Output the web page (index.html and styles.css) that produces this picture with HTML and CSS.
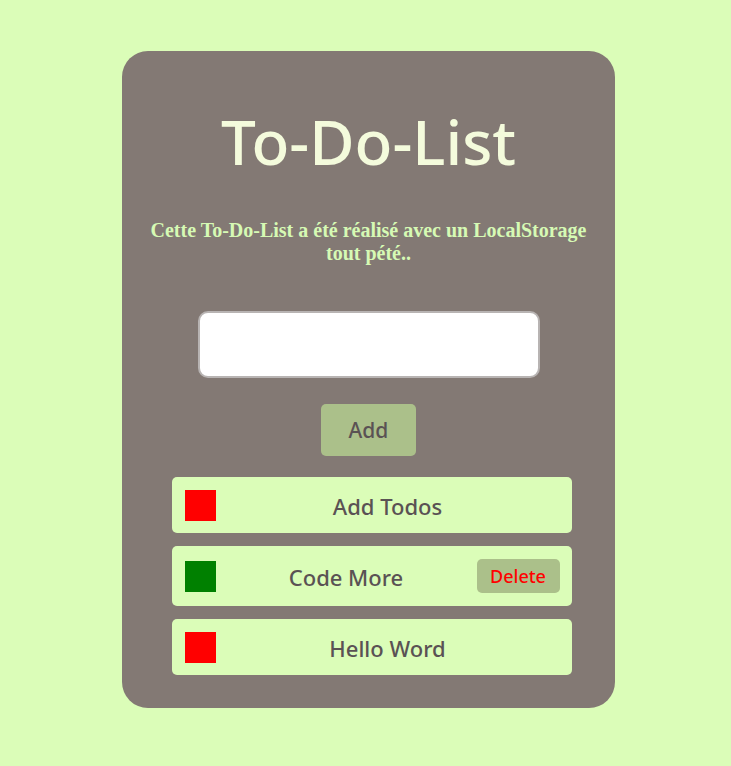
FILE: index.html
```html
<!DOCTYPE html>
<html lang="fr">
<head>
<meta charset="utf-8">
<title>To-Do-List</title>
<link rel="stylesheet" href="styles.css">
</head>
<body>
<main class="card">
  <h1 class="title">To-Do-List</h1>
  <p class="subtitle">Cette To-Do-List a été réalisé avec un LocalStorage tout pété..</p>
  <input class="field" type="text">
  <button class="add">Add</button>
  <ul class="list">
    <li class="item"><span class="box red"></span><span class="label">Add Todos</span></li>
    <li class="item"><span class="box green"></span><span class="label">Code More</span><button class="del">Delete</button></li>
    <li class="item"><span class="box red"></span><span class="label">Hello Word</span></li>
  </ul>
</main>
</body>
</html>
```

FILE: styles.css
```css
html, body {
  margin: 0;
  padding: 0;
  background: #dbfdb8;
}
body {
  display: flex;
  justify-content: center;
  padding-top: 51px;
  font-family: "Noto Sans", "Open Sans", sans-serif;
}
.card {
  width: 493px;
  margin-left: 6px;
  box-sizing: border-box;
  background: #837974;
  border-radius: 26px;
  display: flex;
  flex-direction: column;
  align-items: center;
  padding: 50px 0 33px;
}
.title {
  margin: 0;
  font-size: 62px;
  font-weight: 500;
  line-height: 80px;
  color: #f4fbdc;
}
.subtitle {
  margin: 38px 0 0;
  width: 450px;
  text-align: center;
  font-family: "Liberation Serif", serif;
  font-weight: bold;
  font-size: 20px;
  line-height: 23px;
  color: #d6fab4;
}
.field {
  margin-top: 46px;
  width: 342px;
  height: 67px;
  box-sizing: border-box;
  border: 2px solid #b8b4b3;
  border-radius: 10px;
  background: #fff;
}
.add {
  margin-top: 26px;
  width: 95px;
  height: 52px;
  border: none;
  border-radius: 5px;
  background: #abc08a;
  color: #5a5254;
  font-family: inherit;
  font-weight: 500;
  font-size: 21px;
}
.list {
  list-style: none;
  margin: 21px 0 0 6px;
  padding: 0;
  width: 400px;
  display: flex;
  flex-direction: column;
  gap: 13px;
}
.item {
  display: flex;
  align-items: center;
  box-sizing: border-box;
  padding: 13px 12px 12px 13px;
  background: #dbfdb8;
  border-radius: 5px;
}
.box {
  width: 31px;
  height: 31px;
  flex: none;
}
.red { background: #ff0000; }
.green { background: #008000; }
.label {
  flex: 1;
  text-align: center;
  font-size: 22px;
  line-height: 30px;
  font-weight: 500;
  color: #5a5254;
}
.del {
  width: 83px;
  height: 34px;
  margin-bottom: 1px;
  border: none;
  border-radius: 5px;
  background: #abc08a;
  color: #ff0000;
  font-family: inherit;
  font-weight: 500;
  font-size: 18px;
}
```
